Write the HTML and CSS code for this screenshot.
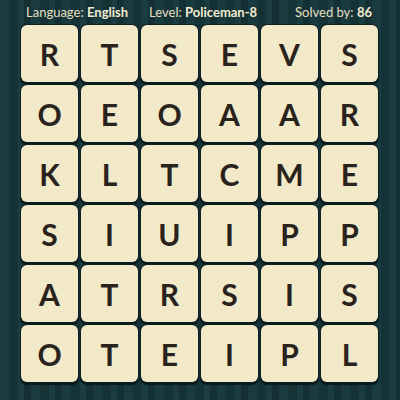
FILE: index.html
```html
<!DOCTYPE html>
<html>
<head>
<meta charset="utf-8">
<link rel="stylesheet" href="styles.css">
</head>
<body>
<div class="page">
  <div class="header">
    <span class="item lang">Language: <b>English</b></span>
    <span class="item level">Level: <b>Policeman-8</b></span>
    <span class="item solved">Solved by: <b>86</b></span>
  </div>
  <div class="grid">
    <div class="tile">R</div><div class="tile">T</div><div class="tile">S</div><div class="tile">E</div><div class="tile">V</div><div class="tile">S</div>
    <div class="tile">O</div><div class="tile">E</div><div class="tile">O</div><div class="tile">A</div><div class="tile">A</div><div class="tile">R</div>
    <div class="tile">K</div><div class="tile">L</div><div class="tile">T</div><div class="tile">C</div><div class="tile">M</div><div class="tile">E</div>
    <div class="tile">S</div><div class="tile">I</div><div class="tile">U</div><div class="tile">I</div><div class="tile">P</div><div class="tile">P</div>
    <div class="tile">A</div><div class="tile">T</div><div class="tile">R</div><div class="tile">S</div><div class="tile">I</div><div class="tile">S</div>
    <div class="tile">O</div><div class="tile">T</div><div class="tile">E</div><div class="tile">I</div><div class="tile">P</div><div class="tile">L</div>
  </div>
</div>
</body>
</html>
```
FILE: styles.css
```css
html, body {
  margin: 0;
  padding: 0;
}
body {
  width: 400px;
  height: 400px;
  overflow: hidden;
  background-color: #17363a;
  background-image: repeating-linear-gradient(90deg,
    #193a3e 0px, #193a3e 9px,
    #153236 9px, #153236 18px,
    #1b3d41 18px, #1b3d41 24px,
    #143034 24px, #143034 31px);
  font-family: Lato, "Open Sans", sans-serif;
}
.page {
  display: flex;
  flex-direction: column;
}
.header {
  height: 23px;
  padding-bottom: 2px;
  display: flex;
  align-items: center;
  color: #e6dfc0;
  font-size: 13px;
}
.header b {
  font-weight: 700;
  color: #f3ecd2;
}
.item.lang { margin-left: 26px; }
.item.level { margin-left: 21px; }
.item.solved { margin-left: auto; margin-right: 28px; }
.grid {
  display: grid;
  grid-template-columns: repeat(6, 57px);
  grid-auto-rows: 57px;
  gap: 3px;
  margin-left: 21px;
}
.tile {
  background: #f1e9c7;
  border-radius: 6px;
  box-shadow: 0 0 0 1px #0c1f22, 0 2px 1px 1px #0a1a1c;
  display: flex;
  align-items: center;
  justify-content: center;
  color: #2a231d;
  font-size: 30px;
  font-weight: 700;
  line-height: 1;
}
```
